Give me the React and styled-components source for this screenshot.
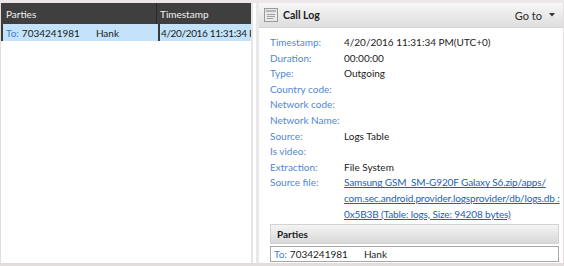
import React from 'react'
import styled, { createGlobalStyle } from 'styled-components'

const GlobalStyle = createGlobalStyle`
  html, body {
    margin: 0;
    padding: 0;
    background: #ffffff;
  }
  body {
    font-family: Lato, "Open Sans", sans-serif;
    font-size: 10px;
  }
`

const Frame = styled.div`
  width: 564px;
  height: 266px;
  box-sizing: border-box;
  display: flex;
  border-top: 3px solid #ece8e8;
  border-bottom: 3px solid #e2dcdc;
  overflow: hidden;
`

const LeftPane = styled.div`
  width: 251px;
  flex-shrink: 0;
  display: flex;
  flex-direction: column;
  border-left: 1px solid #e4dede;
  box-sizing: border-box;
`

const GridHeader = styled.div`
  display: grid;
  grid-template-columns: 155px 1fr;
  height: 21px;
  flex-shrink: 0;
  background: #3f3f3f;
  color: #f2f2f2;
`

const HeaderCell = styled.div`
  padding-left: ${p => (p.$divider ? '3px' : '5px')};
  display: flex;
  align-items: center;
  border-left: ${p => (p.$divider ? '1px solid #2a2a2a' : 'none')};
  white-space: nowrap;
  overflow: hidden;
`

const GridRow = styled.div`
  display: grid;
  grid-template-columns: 155px 1fr;
  height: 17px;
  flex-shrink: 0;
  background: #c4e3fa;
  border-left: 2px solid #3a3a3a;
  box-sizing: border-box;
  color: #1c1c1c;
`

const RowCell = styled.div`
  padding-left: ${p => (p.$divider ? '1px' : '3px')};
  letter-spacing: ${p => (p.$divider ? '-0.35px' : '0')};
  display: flex;
  align-items: center;
  border-left: ${p => (p.$divider ? '2px solid #3a3a3a' : 'none')};
  white-space: nowrap;
  overflow: hidden;
`

const Prefix = styled.span`
  color: #3f7fd0;
  margin-right: 3px;
`

const Gap = styled.span`
  display: inline-block;
  width: 16px;
`

const Splitter = styled.div`
  width: 8px;
  flex-shrink: 0;
  background: linear-gradient(to right, #e6e6e6 0, #e6e6e6 2px, #ffffff 2px, #ffffff 5px, #e8e8e8 5px);
`

const RightPane = styled.div`
  flex: 1;
  min-width: 0;
  display: flex;
  flex-direction: column;
  border-right: 1px solid #e4dede;
`

const PanelHeader = styled.div`
  height: 24px;
  flex-shrink: 0;
  display: flex;
  align-items: center;
  padding: 0 8px 0 5px;
  background: linear-gradient(to bottom, #f7f7f7, #dedede);
  border-bottom: 1px solid #d4d4d4;
`

const Title = styled.div`
  font-weight: 700;
  font-size: 10.5px;
  color: #1d1d1d;
  margin-left: 5px;
  flex: 1;
`

const GoTo = styled.div`
  color: #2b2b2b;
  font-size: 11px;
  display: flex;
  align-items: center;
  gap: 7px;
`

const Details = styled.div`
  display: grid;
  grid-template-columns: 74px 1fr;
  flex-shrink: 0;
  padding: 7px 0 0 11px;
  line-height: 15.6px;
`

const Label = styled.div`
  color: #5088d6;
  white-space: nowrap;
`

const Value = styled.div`
  color: #1c1c1c;
  white-space: nowrap;
`

const Link = styled.a`
  color: #2060b8;
  text-decoration: underline;
  letter-spacing: -0.12px;
`

const SubHeader = styled.div`
  margin: 2px 4px 0 11px;
  height: 18px;
  flex-shrink: 0;
  display: flex;
  align-items: center;
  padding-left: 6px;
  font-weight: 700;
  color: #1d1d1d;
  background: linear-gradient(to bottom, #f4f4f4, #d9d9d9);
  border: 1px solid #d2d2d2;
`

const PartyBox = styled.div`
  margin: 2px 4px 0 11px;
  height: 14px;
  flex-shrink: 0;
  display: flex;
  align-items: center;
  padding-left: 3px;
  border: 1px solid #a8a8a8;
  color: #1c1c1c;
`

const LogIcon = () => (
  <svg width="14" height="14" viewBox="0 0 14 14">
    <rect x="0.5" y="0.5" width="13" height="13" fill="#e9e9e9" stroke="#9a9a9a" />
    <rect x="2" y="2" width="10" height="2" fill="#b5b5b5" />
    <line x1="3" y1="6.5" x2="11" y2="6.5" stroke="#a3a3a3" />
    <line x1="3" y1="8.5" x2="11" y2="8.5" stroke="#a3a3a3" />
    <line x1="3" y1="10.5" x2="9" y2="10.5" stroke="#a3a3a3" />
  </svg>
)

const Caret = () => (
  <svg width="6" height="4" viewBox="0 0 6 4">
    <path d="M0 0 L6 0 L3 3.5 Z" fill="#333" />
  </svg>
)

const fields = [
  ['Timestamp:', '4/20/2016 11:31:34 PM(UTC+0)'],
  ['Duration:', '00:00:00'],
  ['Type:', 'Outgoing'],
  ['Country code:', ''],
  ['Network code:', ''],
  ['Network Name:', ''],
  ['Source:', 'Logs Table'],
  ['Is video:', ''],
  ['Extraction:', 'File System'],
]

const App = () => {
  return (
    <>
      <GlobalStyle />
      <Frame>
        <LeftPane>
          <GridHeader>
            <HeaderCell>Parties</HeaderCell>
            <HeaderCell $divider>Timestamp</HeaderCell>
          </GridHeader>
          <GridRow>
            <RowCell>
              <Prefix>To:</Prefix>7034241981<Gap />Hank
            </RowCell>
            <RowCell $divider>4/20/2016 11:31:34 PM</RowCell>
          </GridRow>
        </LeftPane>
        <Splitter />
        <RightPane>
          <PanelHeader>
            <LogIcon />
            <Title>Call Log</Title>
            <GoTo>Go to <Caret /></GoTo>
          </PanelHeader>
          <Details>
            {fields.map(([k, v]) => (
              <React.Fragment key={k}>
                <Label>{k}</Label>
                <Value>{v}</Value>
              </React.Fragment>
            ))}
            <Label>Source file:</Label>
            <Value>
              <Link>Samsung GSM_SM-G920F Galaxy S6.zip/apps/<br />com.sec.android.provider.logsprovider/db/logs.db :<br />0x5B3B (Table: logs, Size: 94208 bytes)</Link>
            </Value>
          </Details>
          <SubHeader>Parties</SubHeader>
          <PartyBox>
            <Prefix>To:</Prefix>7034241981<Gap />Hank
          </PartyBox>
        </RightPane>
      </Frame>
    </>
  )
}

export default App
